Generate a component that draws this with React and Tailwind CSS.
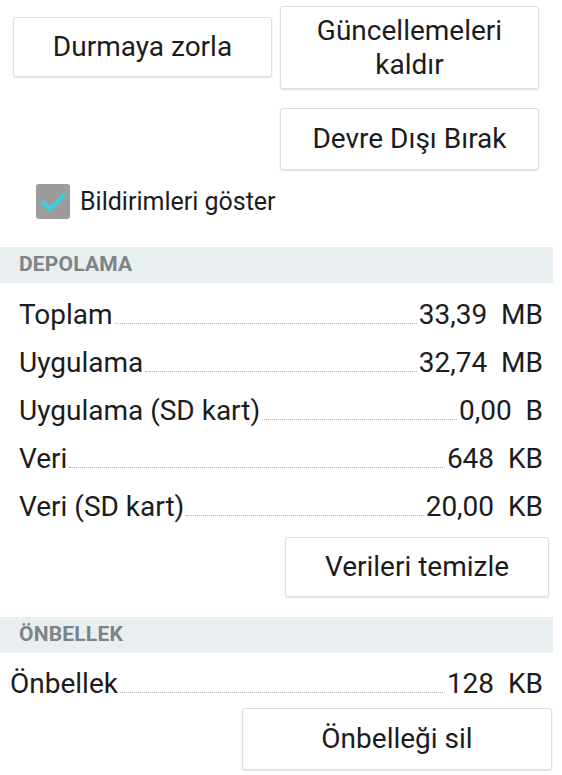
const FONT = { fontFamily: 'Roboto, "Noto Sans", sans-serif' }

const STORAGE = [
  { label: 'Toplam', value: '33,39  MB' },
  { label: 'Uygulama', value: '32,74  MB' },
  { label: 'Uygulama (SD kart)', value: '0,00  B' },
  { label: 'Veri', value: '648  KB' },
  { label: 'Veri (SD kart)', value: '20,00  KB' },
]

function Btn({ className = '', children }) {
  return (
    <button
      className={`bg-white border border-[#dedede] rounded-[3px] shadow-[0_1px_2px_rgba(0,0,0,0.12)] text-[28px] text-[#1c1c1c] flex items-center justify-center text-center shrink-0 ${className}`}
    >
      {children}
    </button>
  )
}

function SectionHeader({ children, className = '' }) {
  return (
    <div className={`w-[553px] h-[36px] bg-[#e9eef0] flex items-center pl-[19px] ${className}`}>
      <span className="text-[21px] font-bold text-[#7b8487] tracking-[0.2px]">{children}</span>
    </div>
  )
}

function InfoRow({ label, value, indent = 'pl-[19px]' }) {
  return (
    <div className={`h-[48px] leading-[48px] flex items-baseline ${indent} pr-[19px] text-[28px] text-[#1c1c1c]`}>
      <span className="shrink-0">{label}</span>
      <div className="flex-1 mx-[2px] border-b border-dotted border-[#b4b4b4]" />
      <span className="shrink-0 whitespace-pre">{value}</span>
    </div>
  )
}

export default function App() {
  return (
    <div className="w-[562px] h-[775px] bg-white overflow-hidden" style={FONT}>
      {/* App actions */}
      <div className="flex items-start pt-[6px]">
        <Btn className="ml-[13px] mt-[11px] w-[259px] h-[60px]">Durmaya zorla</Btn>
        <Btn className="ml-[8px] w-[259px] h-[83px] leading-[34px]">
          Güncellemeleri
          <br />
          kaldır
        </Btn>
      </div>
      <Btn className="ml-[280px] mt-[19px] w-[259px] h-[62px]">Devre Dışı Bırak</Btn>

      {/* Notifications checkbox */}
      <div className="flex items-center gap-[10px] pl-[36px] mt-[14px] h-[35px]">
        <div className="w-[34px] h-[35px] rounded-[3px] bg-[#9c9c9c] flex items-center justify-center">
          <svg width="26" height="22" viewBox="0 0 26 22" fill="none">
            <path d="M3 11.5l7 7L23.5 4" stroke="#3dd0dc" strokeWidth="4.2" strokeLinecap="round" strokeLinejoin="round" />
          </svg>
        </div>
        <span className="text-[25px] leading-[30px] text-[#1c1c1c]">Bildirimleri göster</span>
      </div>

      {/* Storage */}
      <SectionHeader className="mt-[28px]">DEPOLAMA</SectionHeader>
      <div className="pt-[8px]">
        {STORAGE.map(r => (
          <InfoRow key={r.label} label={r.label} value={r.value} />
        ))}
      </div>
      <Btn className="ml-[285px] mt-[6px] w-[264px] h-[60px]">Verileri temizle</Btn>

      {/* Cache */}
      <SectionHeader className="mt-[20px]">ÖNBELLEK</SectionHeader>
      <div className="mt-[7px]">
        <InfoRow label="Önbellek" value="128  KB" indent="pl-[10px]" />
      </div>
      <Btn className="ml-[242px] w-[310px] h-[62px]">Önbelleği sil</Btn>
    </div>
  )
}
